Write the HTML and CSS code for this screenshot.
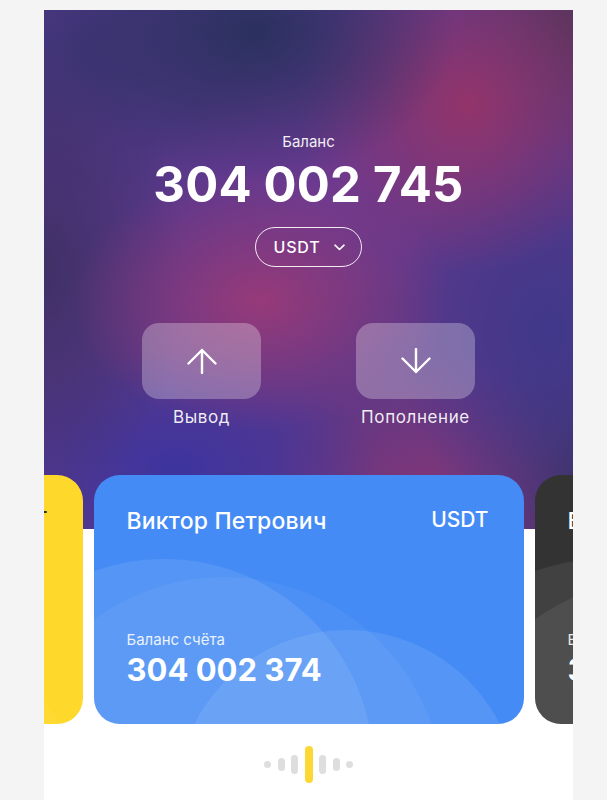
FILE: index.html
```html
<!DOCTYPE html>
<html lang="ru">
<head>
<meta charset="utf-8">
<title>Баланс</title>
<link rel="stylesheet" href="styles.css">
</head>
<body>
<div class="phone">
  <section class="hero">
    <div class="hero-label">Баланс</div>
    <div class="hero-amount">304 002 745</div>
    <button class="currency">
      <span>USDT</span>
      <svg class="chev" width="11" height="7" viewBox="0 0 11 7"><path d="M1 1.2 L5.5 5.5 L10 1.2" fill="none" stroke="#fff" stroke-width="1.6" stroke-linecap="round" stroke-linejoin="round"/></svg>
    </button>
    <div class="actions">
      <div class="action">
        <div class="action-btn">
          <svg width="30" height="26" viewBox="0 0 30 26"><path d="M15 25 V2 M1.5 15.5 L15 2 L28.5 15.5" fill="none" stroke="#fff" stroke-width="2.4" stroke-linecap="round" stroke-linejoin="round"/></svg>
        </div>
        <div class="action-label">Вывод</div>
      </div>
      <div class="action">
        <div class="action-btn">
          <svg width="30" height="26" viewBox="0 0 30 26"><path d="M15 1 V24 M1.5 10.5 L15 24 L28.5 10.5" fill="none" stroke="#fff" stroke-width="2.4" stroke-linecap="round" stroke-linejoin="round"/></svg>
        </div>
        <div class="action-label">Пополнение</div>
      </div>
    </div>
  </section>

  <div class="carousel">
    <div class="card card-yellow">
      <span class="blob blob-a"></span><span class="blob blob-b"></span><span class="blob blob-c"></span>
      <div class="card-top">
        <span class="card-name">Виктор Петрович</span>
        <span class="card-cur">USDT</span>
      </div>
      <div class="card-bottom">
        <div class="card-label">Баланс счёта</div>
        <div class="card-amount">304 002 374</div>
      </div>
    </div>
    <div class="card card-blue">
      <span class="blob blob-a"></span><span class="blob blob-b"></span><span class="blob blob-c"></span>
      <div class="card-top">
        <span class="card-name">Виктор Петрович</span>
        <span class="card-cur">USDT</span>
      </div>
      <div class="card-bottom">
        <div class="card-label">Баланс счёта</div>
        <div class="card-amount">304 002 374</div>
      </div>
    </div>
    <div class="card card-dark">
      <span class="blob blob-a"></span><span class="blob blob-b"></span><span class="blob blob-c"></span>
      <div class="card-top">
        <span class="card-name">Виктор Петрович</span>
        <span class="card-cur">USDT</span>
      </div>
      <div class="card-bottom">
        <div class="card-label">Баланс счёта</div>
        <div class="card-amount">304 002 374</div>
      </div>
    </div>
  </div>

  <div class="pager">
    <span class="pg pg-1"></span>
    <span class="pg pg-2"></span>
    <span class="pg pg-3"></span>
    <span class="pg pg-active"></span>
    <span class="pg pg-3"></span>
    <span class="pg pg-2"></span>
    <span class="pg pg-1"></span>
  </div>
</div>
</body>
</html>
```

FILE: styles.css
```css
* { box-sizing: border-box; }

html, body {
  margin: 0;
  padding: 0;
}

body {
  background: #f4f4f4;
  font-family: Inter, "Noto Sans", sans-serif;
  padding: 10px 0 0 44px;
  min-height: 800px;
}

.phone {
  width: 529px;
  height: 790px;
  background: #ffffff;
  overflow: hidden;
}

.hero {
  height: 519px;
  padding-top: 123px;
  display: flex;
  flex-direction: column;
  align-items: center;
  color: #fff;
  background:
    radial-gradient(ellipse 200px 150px at 40% 4%, rgba(40, 48, 92, 0.95), rgba(40, 48, 92, 0) 100%),
    radial-gradient(ellipse 170px 170px at 80% 18%, rgba(150, 52, 104, 0.95), rgba(150, 52, 104, 0) 100%),
    radial-gradient(ellipse 120px 140px at 100% 2%, rgba(80, 52, 84, 0.9), rgba(80, 52, 84, 0) 100%),
    radial-gradient(ellipse 190px 130px at 41% 56%, rgba(154, 58, 120, 0.95), rgba(154, 58, 120, 0) 100%),
    radial-gradient(ellipse 150px 200px at 95% 62%, rgba(62, 56, 138, 0.95), rgba(62, 56, 138, 0) 100%),
    radial-gradient(ellipse 140px 240px at 0% 50%, rgba(62, 48, 100, 0.95), rgba(62, 48, 100, 0) 100%),
    radial-gradient(ellipse 200px 120px at 25% 88%, rgba(60, 52, 160, 0.95), rgba(60, 52, 160, 0) 100%),
    radial-gradient(ellipse 160px 140px at 72% 92%, rgba(130, 54, 118, 0.95), rgba(130, 54, 118, 0) 100%),
    radial-gradient(ellipse 120px 140px at 100% 90%, rgba(56, 50, 96, 0.9), rgba(56, 50, 96, 0) 100%),
    radial-gradient(ellipse 200px 120px at 56% 34%, rgba(110, 58, 146, 0.9), rgba(110, 58, 146, 0) 100%),
    radial-gradient(ellipse 200px 160px at 8% 8%, rgba(60, 52, 116, 0.95), rgba(60, 52, 116, 0) 100%),
    #58388a;
}

.hero-label {
  font-size: 15px;
  line-height: 18px;
  font-weight: 400;
  opacity: 0.92;
}

.hero-amount {
  margin-top: 6px;
  font-size: 49px;
  line-height: 56px;
  font-weight: 700;
  letter-spacing: 0.2px;
}

.currency {
  margin-top: 14px;
  width: 107px;
  height: 40px;
  border: 1.5px solid rgba(255, 255, 255, 0.9);
  border-radius: 20px;
  background: transparent;
  color: #fff;
  font-family: inherit;
  font-size: 16px;
  font-weight: 500;
  letter-spacing: 0.8px;
  display: flex;
  align-items: center;
  justify-content: center;
  gap: 14px;
  padding: 0 0 0 2px;
}

.chev { display: block; margin-top: 1px; }

.actions {
  margin-top: 56px;
  display: flex;
  gap: 95px;
}

.action {
  width: 119px;
  display: flex;
  flex-direction: column;
  align-items: center;
}

.action-btn {
  width: 119px;
  height: 76px;
  border-radius: 17px;
  background: rgba(255, 255, 255, 0.28);
  display: flex;
  align-items: center;
  justify-content: center;
}

.action-btn svg { display: block; }

.action-label {
  margin-top: 8px;
  font-size: 17px;
  line-height: 21px;
  letter-spacing: 0.6px;
  color: rgba(255, 255, 255, 0.92);
  white-space: nowrap;
}

.carousel {
  margin-top: -54px;
  display: flex;
  justify-content: center;
  gap: 11px;
}

.card {
  position: relative;
  flex: 0 0 430px;
  height: 249px;
  border-radius: 26px;
  overflow: hidden;
  padding: 32px 35px 34px 33px;
  display: flex;
  flex-direction: column;
  color: #fff;
}

.card-blue { background: #448bf5; }
.card-yellow { background: #fed92b; color: #2a2a2a; }
.card-dark { background: #333333; }

.blob {
  position: absolute;
  border-radius: 50%;
  background: rgba(255, 255, 255, 0.09);
}

.blob-a { width: 420px; height: 420px; left: -140px; top: 84px; }
.blob-b { width: 440px; height: 440px; left: -90px; top: 102px; background: rgba(255, 255, 255, 0.05); }
.blob-c { width: 342px; height: 342px; left: 82px; top: 155px; }

.card-yellow .blob { background: rgba(255, 255, 255, 0.04); }
.card-dark .blob { background: rgba(255, 255, 255, 0.07); }

.card-top {
  position: relative;
  display: flex;
  justify-content: space-between;
  align-items: flex-start;
}

.card-name {
  font-size: 23px;
  line-height: 28px;
  font-weight: 500;
  letter-spacing: 0.2px;
}

.card-cur {
  font-size: 21px;
  line-height: 28px;
  font-weight: 500;
  margin-top: -1px;
}

.card-bottom {
  position: relative;
  margin-top: auto;
}

.card-label {
  font-size: 15px;
  line-height: 18px;
  opacity: 0.88;
}

.card-amount {
  margin-top: 1px;
  font-size: 31px;
  line-height: 40px;
  font-weight: 700;
}

.pager {
  margin-top: 22px;
  display: flex;
  justify-content: center;
  align-items: center;
  gap: 6.5px;
  height: 37px;
}

.pg {
  width: 7px;
  border-radius: 4px;
  background: #dedede;
}

.pg-1 { height: 7px; }
.pg-2 { height: 13px; }
.pg-3 { height: 19px; }
.pg-active { width: 8px; height: 37px; background: #fdd835; }
```
